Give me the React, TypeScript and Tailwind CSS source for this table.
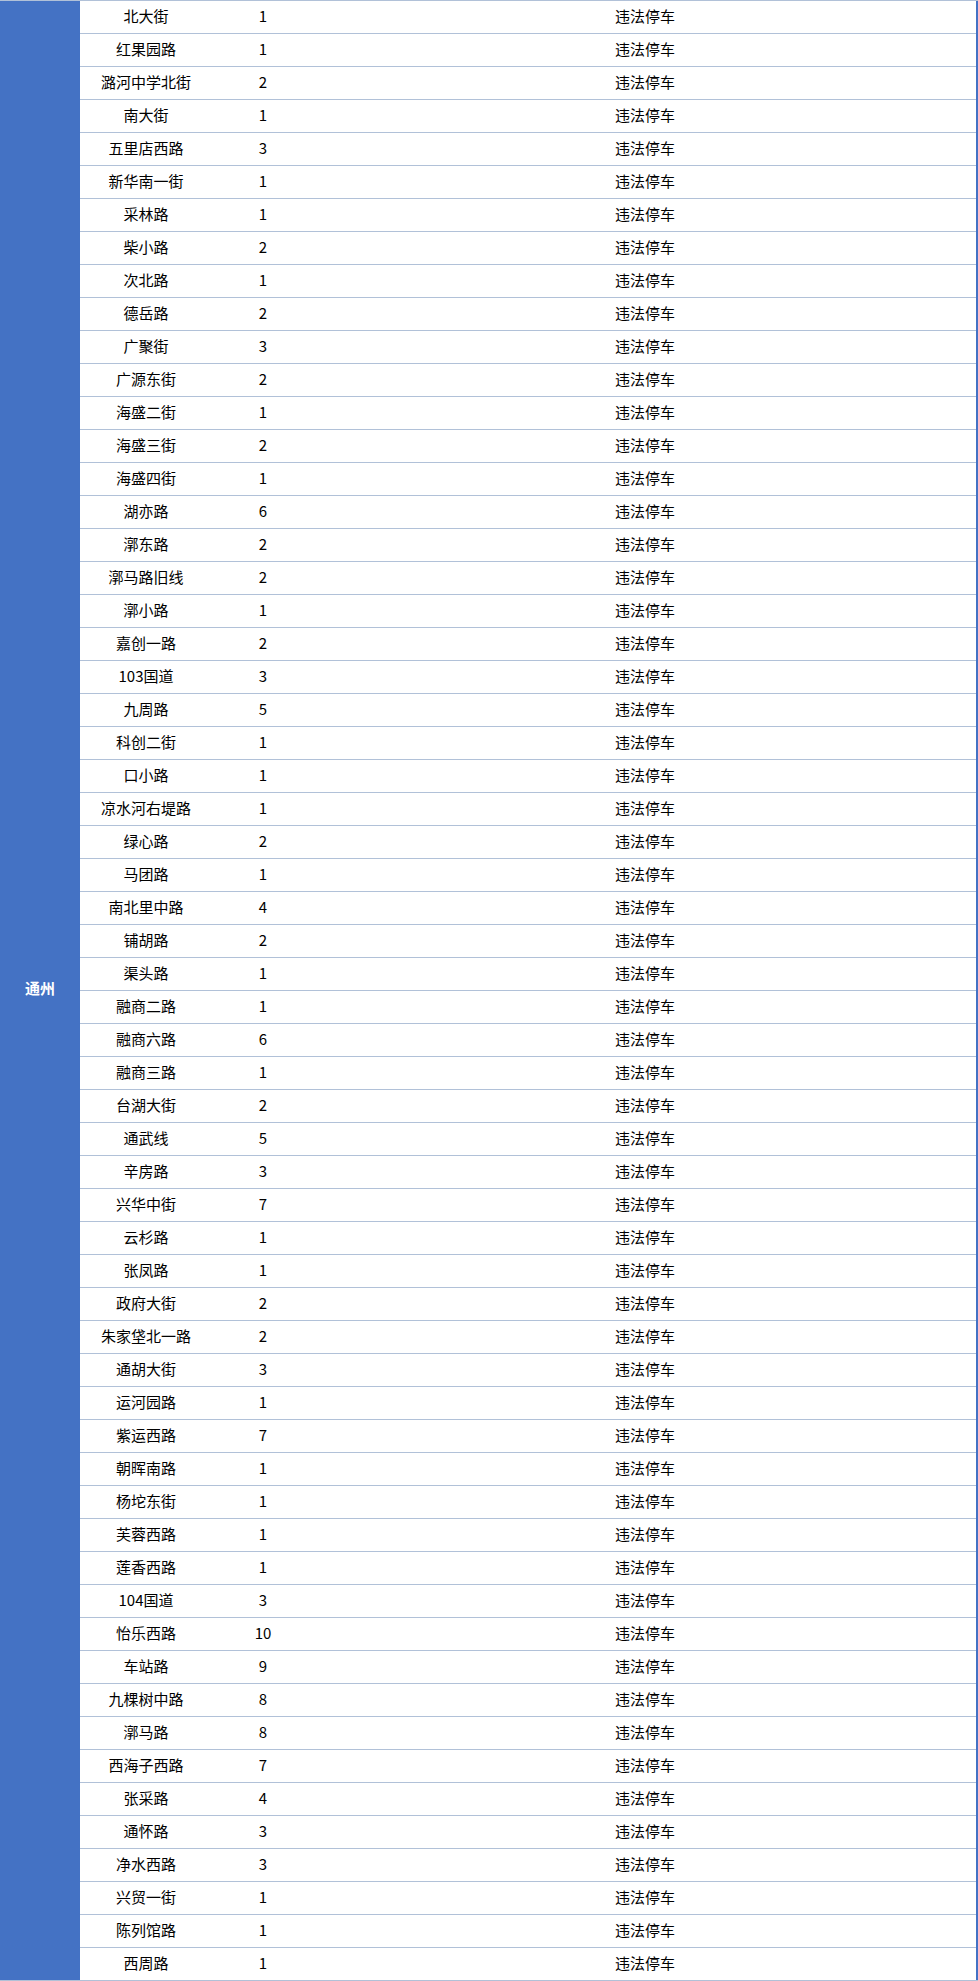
const rows: [string, number][] = [
  ["北大街", 1],
  ["红果园路", 1],
  ["潞河中学北街", 2],
  ["南大街", 1],
  ["五里店西路", 3],
  ["新华南一街", 1],
  ["采林路", 1],
  ["柴小路", 2],
  ["次北路", 1],
  ["德岳路", 2],
  ["广聚街", 3],
  ["广源东街", 2],
  ["海盛二街", 1],
  ["海盛三街", 2],
  ["海盛四街", 1],
  ["湖亦路", 6],
  ["漷东路", 2],
  ["漷马路旧线", 2],
  ["漷小路", 1],
  ["嘉创一路", 2],
  ["103国道", 3],
  ["九周路", 5],
  ["科创二街", 1],
  ["口小路", 1],
  ["凉水河右堤路", 1],
  ["绿心路", 2],
  ["马团路", 1],
  ["南北里中路", 4],
  ["铺胡路", 2],
  ["渠头路", 1],
  ["融商二路", 1],
  ["融商六路", 6],
  ["融商三路", 1],
  ["台湖大街", 2],
  ["通武线", 5],
  ["辛房路", 3],
  ["兴华中街", 7],
  ["云杉路", 1],
  ["张凤路", 1],
  ["政府大街", 2],
  ["朱家垡北一路", 2],
  ["通胡大街", 3],
  ["运河园路", 1],
  ["紫运西路", 7],
  ["朝晖南路", 1],
  ["杨坨东街", 1],
  ["芙蓉西路", 1],
  ["莲香西路", 1],
  ["104国道", 3],
  ["怡乐西路", 10],
  ["车站路", 9],
  ["九棵树中路", 8],
  ["漷马路", 8],
  ["西海子西路", 7],
  ["张采路", 4],
  ["通怀路", 3],
  ["净水西路", 3],
  ["兴贸一街", 1],
  ["陈列馆路", 1],
  ["西周路", 1],
]

export default function App() {
  return (
    <div className="w-[978px] bg-white font-['Noto_Sans_CJK_SC',sans-serif] text-[15px] text-black">
      <div className="flex border-y border-[#b1c1d8]">
        {/* district cell spans all rows */}
        <div className="w-[80px] shrink-0 bg-[#4472c4] flex items-center justify-center pb-[4px] text-white font-bold">
          通州
        </div>

        <div className="flex-1 flex flex-col border-r-2 border-r-[#4472c4]">
          {rows.map(([road, count], i) => (
            <div
              key={road + i}
              className={`flex items-center pb-[4px] ${i < rows.length - 1 ? "h-[33px] border-b border-[#b1c1d8]" : "h-[32px]"}`}
            >
              <div className="w-[132px] text-center leading-none">{road}</div>
              <div className="w-[102px] text-center leading-none">{count}</div>
              <div className="flex-1 text-center leading-none">违法停车</div>
            </div>
          ))}
        </div>
      </div>
    </div>
  )
}
